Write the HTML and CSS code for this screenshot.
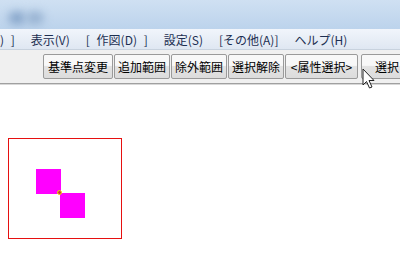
FILE: index.html
```html
<!DOCTYPE html>
<html lang="ja">
<head>
    <meta charset="UTF-8">
    <title>作図</title>
    <link rel="stylesheet" href="styles.css">
</head>
<body>
    <div class="titlebar">
        <span class="glow g1"></span>
        <span class="glow g2"></span>
    </div>
    <div class="menubar">
        <span class="menu first">) ]</span>
        <span class="menu">表示(V)</span>
        <span class="menu">[ 作図(D) ]</span>
        <span class="menu">設定(S)</span>
        <span class="menu">[その他(A)]</span>
        <span class="menu">ヘルプ(H)</span>
    </div>
    <div class="toolbar">
        <button class="btn w1">基準点変更</button>
        <button class="btn w2">追加範囲</button>
        <button class="btn w2">除外範囲</button>
        <button class="btn w2">選択解除</button>
        <button class="btn w3">&lt;属性選択&gt;</button>
        <button class="btn last">選択</button>
    </div>
    <div class="canvas">
        <div class="frame">
            <div class="shape s1"></div>
            <div class="shape s2"></div>
            <div class="pin"></div>
        </div>
    </div>
    <!-- mouse pointer -->
    <svg class="cursor" width="14" height="22" viewBox="0 0 14 22">
        <path d="M1 1 L1 17 L4.5 13.5 L7.5 20 L10 19 L7 12.5 L12 12.5 Z" fill="#fff" stroke="#222" stroke-width="1"/>
    </svg>
</body>
</html>
```

FILE: styles.css
```css
body {
    margin: 0;
    width: 400px;
    height: 255px;
    overflow: hidden;
    background: #ffffff;
    font-family: "Noto Sans CJK JP", "DejaVu Sans", sans-serif;
    position: relative;
}
.titlebar {
    height: 29px;
    background: linear-gradient(#cfe0f2, #bcd3ec);
    position: relative;
    overflow: hidden;
}
.glow {
    position: absolute;
    width: 18px;
    height: 14px;
    border-radius: 50%;
    background: #8aa8cc;
    filter: blur(4px);
    top: 11px;
}
.g1 { left: 8px; }
.g2 { left: 26px; background: #98b3d2; }
.menubar {
    height: 19px;
    display: flex;
    align-items: center;
    padding-top: 1px;
    background: linear-gradient(#f1f5fb, #dfe7f2);
    border-bottom: 1px solid #c8d2de;
    font-size: 12px;
    color: #1d2f52;
    white-space: nowrap;
    word-spacing: 4px;
    overflow: hidden;
}
.menu {
    margin-left: 16px;
}
.menu.first {
    margin-left: 0;
}
.toolbar {
    height: 33px;
    display: flex;
    align-items: center;
    padding-left: 43px;
    background: #f0f0f0;
    border-bottom: 1px solid #a0a0a0;
    box-shadow: 0 1px 0 #d8d8d8;
    overflow: hidden;
}
.btn {
    height: 25px;
    margin: 0 1px 0 0;
    padding: 0;
    border: 1px solid #9a9a9a;
    border-radius: 2px;
    background: linear-gradient(#f8f8f8 45%, #e3e3e3 50%, #dcdcdc);
    font-family: "Noto Sans CJK JP", sans-serif;
    font-size: 12px;
    color: #000;
    white-space: nowrap;
    flex-shrink: 0;
}
.w1 { width: 70px; }
.w2 { width: 56px; }
.w3 { width: 73px; }
.last {
    width: 70px;
    margin-left: 2px;
    padding-left: 13px;
    text-align: left;
}
.canvas {
    padding: 54px 0 0 8px;
}
.frame {
    position: relative;
    width: 112px;
    height: 99px;
    border: 1px solid #e61010;
}
.shape {
    position: absolute;
    width: 25px;
    height: 25px;
    background: #ff00ff;
}
.s1 { left: 27px; top: 30px; }
.s2 { left: 51px; top: 54px; }
.pin {
    position: absolute;
    left: 48px;
    top: 51px;
    width: 3px;
    height: 3px;
    border: 1px solid #f2dc00;
    border-radius: 50%;
    background: #c04040;
}
.cursor {
    position: absolute;
    left: 362px;
    top: 68px;
}
```
